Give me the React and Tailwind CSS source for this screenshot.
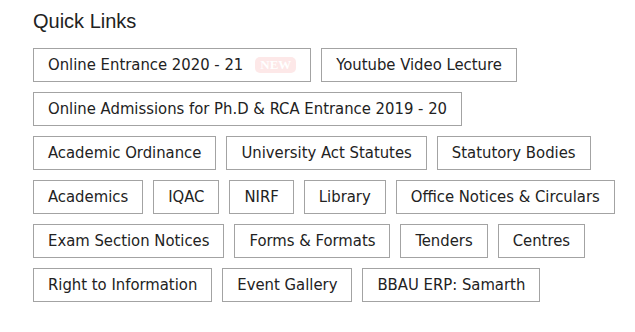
import React from "react";

const rows = [
  [{ label: "Online Entrance 2020 - 21", isNew: true }, { label: "Youtube Video Lecture" }],
  [{ label: "Online Admissions for Ph.D & RCA Entrance 2019 - 20" }],
  [{ label: "Academic Ordinance" }, { label: "University Act Statutes" }, { label: "Statutory Bodies" }],
  [
    { label: "Academics" },
    { label: "IQAC" },
    { label: "NIRF" },
    { label: "Library" },
    { label: "Office Notices & Circulars" },
  ],
  [{ label: "Exam Section Notices" }, { label: "Forms & Formats" }, { label: "Tenders" }, { label: "Centres" }],
  [{ label: "Right to Information" }, { label: "Event Gallery" }, { label: "BBAU ERP: Samarth" }],
];

function LinkButton({ label, isNew }) {
  return (
    <a
      href="#"
      className="flex h-[34px] shrink-0 items-center whitespace-nowrap border border-[#a3a3a3] bg-white px-[14px] text-[16.5px] leading-5 text-[#222] [font-family:'DejaVu_Sans_Condensed','DejaVu_Sans',sans-serif]"
    >
      {label}
      {isNew && (
        <span className="ml-[12px] rounded-[5px] bg-[#fde8e8] px-[5px] text-[13px] font-bold leading-[16px] text-white [font-family:'Liberation_Serif',serif]">
          NEW
        </span>
      )}
    </a>
  );
}

export default function App() {
  return (
    <div className="min-h-[332px] bg-white px-[33px] pt-[9px]">
      <h3 className="text-[20px] leading-[24px] text-[#222] [font-family:'Liberation_Sans',Arial,sans-serif]">
        Quick Links
      </h3>

      {/* link buttons */}
      <div className="mt-[15px] flex flex-col gap-[10px]">
        {rows.map((row, i) => (
          <div key={i} className="flex gap-[10px]">
            {row.map((item) => (
              <LinkButton key={item.label} {...item} />
            ))}
          </div>
        ))}
      </div>
    </div>
  );
}
